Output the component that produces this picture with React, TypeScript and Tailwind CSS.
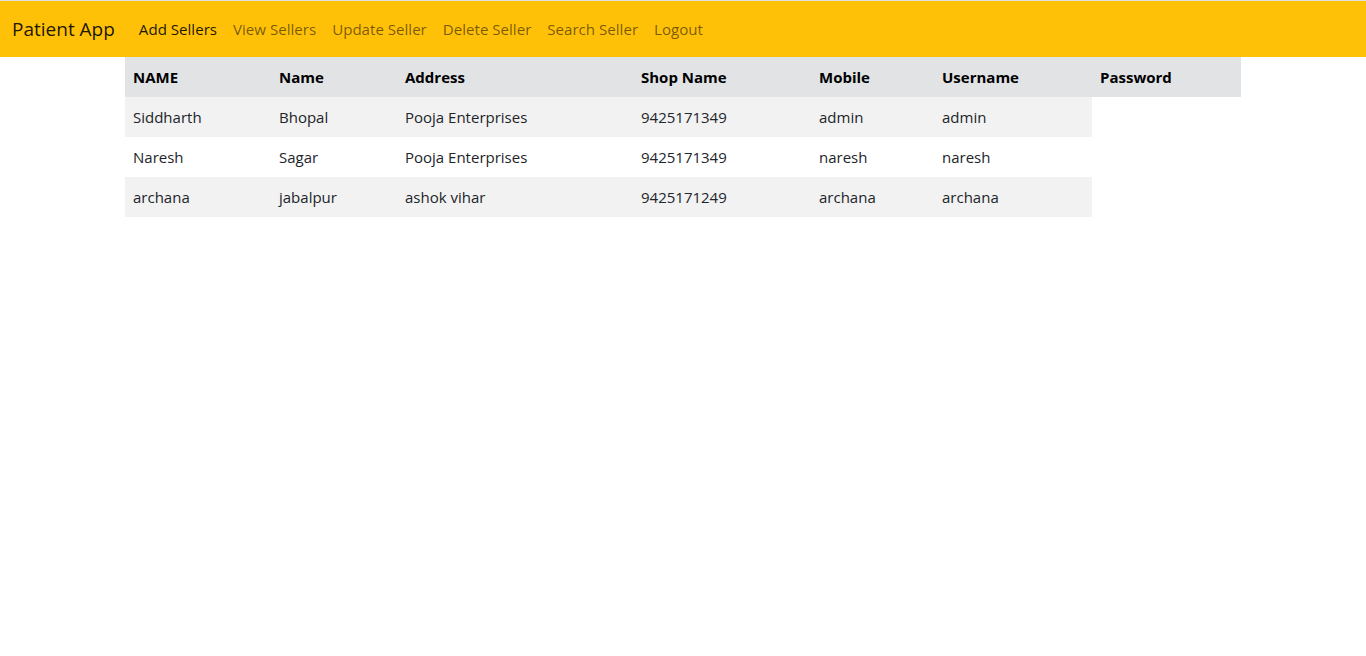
const links = ['Add Sellers', 'View Sellers', 'Update Seller', 'Delete Seller', 'Search Seller', 'Logout'];

const cols = [
  { label: 'NAME', w: 'w-[146px]' },
  { label: 'Name', w: 'w-[126px]' },
  { label: 'Address', w: 'w-[236px]' },
  { label: 'Shop Name', w: 'w-[178px]' },
  { label: 'Mobile', w: 'w-[123px]' },
  { label: 'Username', w: 'w-[158px]' },
  { label: 'Password', w: 'w-[149px]' },
];

const sellers = [
  ['Siddharth', 'Bhopal', 'Pooja Enterprises', '9425171349', 'admin', 'admin'],
  ['Naresh', 'Sagar', 'Pooja Enterprises', '9425171349', 'naresh', 'naresh'],
  ['archana', 'jabalpur', 'ashok vihar', '9425171249', 'archana', 'archana'],
];

export default function App() {
  return (
    <div className="min-h-screen bg-white font-['Open_Sans',sans-serif] text-[#212529] border-t border-[#e0e0e0]">
      {/* Navbar */}
      <nav className="h-[56px] bg-[#ffc107] flex items-center px-3 pt-[1px]">
        <span className="text-[19px] text-black/90 mr-4">Patient App</span>
        <ul className="flex items-center">
          {links.map((l, i) => (
            <li key={l} className={`px-2 text-[15.1px] ${i === 0 ? 'text-black/90' : 'text-black/55'}`}>
              {l}
            </li>
          ))}
        </ul>
      </nav>

      {/* Sellers table */}
      <div className="w-[1116px] mx-auto">
        <table className="border-collapse text-[15px]">
          <thead>
            <tr className="bg-[#e2e3e5]">
              {cols.map((c) => (
                <th key={c.label} className={`${c.w} h-[40px] px-2 text-left font-bold text-black`}>
                  {c.label}
                </th>
              ))}
            </tr>
          </thead>
          <tbody>
            {sellers.map((row, i) => (
              <tr key={i}>
                {row.map((v, j) => (
                  <td key={j} className={`h-[40px] px-2 ${i % 2 === 0 ? 'bg-[#f2f2f2]' : 'bg-white'}`}>
                    {v}
                  </td>
                ))}
              </tr>
            ))}
          </tbody>
        </table>
      </div>
    </div>
  );
}
